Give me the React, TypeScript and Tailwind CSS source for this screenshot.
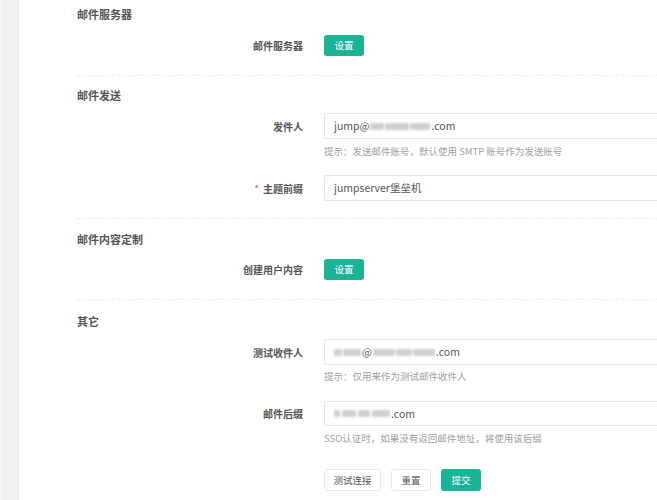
import React from 'react'

const font = { fontFamily: '"Noto Sans CJK SC", "Noto Sans", sans-serif' }

function Title({ children, mt }: { children: React.ReactNode; mt: string }) {
  return <div className={`${mt} h-[20px] leading-[20px] text-[11px] font-bold text-[#555]`}>{children}</div>
}

function Divider({ mt }: { mt: string }) {
  return <div className={`${mt} border-t border-dashed border-[#ebedf0]`} />
}

function Row({ label, required, children, mt, h }: { label?: string; required?: boolean; children: React.ReactNode; mt: string; h: string }) {
  return (
    <div className={`${mt} flex items-center ${h}`}>
      <div className="w-[226px] shrink-0 text-right text-[10px] font-bold text-[#555]">
        {required && <span className="mr-[4px] text-[#ed5565] font-normal">*</span>}
        {label}
      </div>
      <div className="ml-[21px] flex-1 flex items-center h-full">{children}</div>
    </div>
  )
}

function Hint({ children, mt }: { children: React.ReactNode; mt: string }) {
  return <div className={`${mt} pl-[247px] h-[14px] leading-[14px] text-[9.5px] text-[#a0a0a0]`}>{children}</div>
}

function Input({ children }: { children: React.ReactNode }) {
  return (
    <div className="h-full w-[360px] border border-[#e5e6e7] rounded-l-[2px] border-r-0 flex items-center pl-[9px] text-[10.5px] text-[#555] whitespace-nowrap">
      {children}
    </div>
  )
}

function Blur({ w }: { w: string }) {
  return <span className={`inline-block ${w} h-[7px] bg-[#cfcfcf] blur-[1.2px] rounded-[1px]`} />
}

function GreenBtn({ children, w }: { children: React.ReactNode; w: string }) {
  return (
    <button className={`${w} h-[21px] rounded-[3px] bg-[#1ab394] text-white text-[9.5px] flex items-center justify-center`}>{children}</button>
  )
}

export default function App() {
  return (
    <div className="flex w-[657px] h-[500px] bg-white overflow-hidden" style={font}>
      <div className="w-[19px] shrink-0 bg-[#f1f1f2] border-l-[2px] border-[#f7f7f8] border-r border-r-[#e9e9ea]" />
      <div className="flex-1 flex flex-col pl-[58px] pt-[4px]">
        <Title mt="mt-0">邮件服务器</Title>
        <Row label="邮件服务器" mt="mt-[11px]" h="h-[21px]">
          <GreenBtn w="w-[40px]">设置</GreenBtn>
        </Row>
        <Divider mt="mt-[19px]" />

        <Title mt="mt-[9px]">邮件发送</Title>
        <Row label="发件人" mt="mt-[8px]" h="h-[26px]">
          <Input>
            jump@<span className="inline-flex items-center gap-[1px] mx-[1px]"><Blur w="w-[14px]" /><Blur w="w-[24px]" /><Blur w="w-[20px]" /></span>.com
          </Input>
        </Row>
        <Hint mt="mt-[5px]">提示：发送邮件账号，默认使用 SMTP 账号作为发送账号</Hint>
        <Row label="主题前缀" required mt="mt-[17px]" h="h-[26px]">
          <Input>jumpserver堡垒机</Input>
        </Row>
        <Divider mt="mt-[17px]" />

        <Title mt="mt-[10px]">邮件内容定制</Title>
        <Row label="创建用户内容" mt="mt-[10px]" h="h-[21px]">
          <GreenBtn w="w-[40px]">设置</GreenBtn>
        </Row>
        <Divider mt="mt-[19px]" />

        <Title mt="mt-[11px]">其它</Title>
        <Row label="测试收件人" mt="mt-[8px]" h="h-[26px]">
          <Input>
            <span className="inline-flex items-center gap-[1px] mr-[1px]"><Blur w="w-[8px]" /><Blur w="w-[18px]" /></span>@<span className="inline-flex items-center gap-[1px] mx-[1px]"><Blur w="w-[22px]" /><Blur w="w-[16px]" /><Blur w="w-[22px]" /></span>.com
          </Input>
        </Row>
        <Hint mt="mt-[4px]">提示：仅用来作为测试邮件收件人</Hint>
        <Row label="邮件后缀" mt="mt-[18px]" h="h-[25px]">
          <Input>
            <span className="inline-flex items-center gap-[2px] mr-[1px]"><Blur w="w-[6px]" /><Blur w="w-[14px]" /><Blur w="w-[12px]" /><Blur w="w-[18px]" /></span>.com
          </Input>
        </Row>
        <Hint mt="mt-[5px]">SSO认证时，如果没有返回邮件地址，将使用该后缀</Hint>
        <div className="mt-[24px] pl-[247px] flex gap-[10px]">
          <button className="w-[57px] h-[22px] rounded-[3px] border border-[#e7eaec] bg-white text-[9.5px] text-[#555]">测试连接</button>
          <button className="w-[40px] h-[22px] rounded-[3px] border border-[#e7eaec] bg-white text-[9.5px] text-[#555]">重置</button>
          <button className="w-[40px] h-[22px] rounded-[3px] bg-[#1ab394] text-white text-[9.5px]">提交</button>
        </div>
      </div>
    </div>
  )
}
